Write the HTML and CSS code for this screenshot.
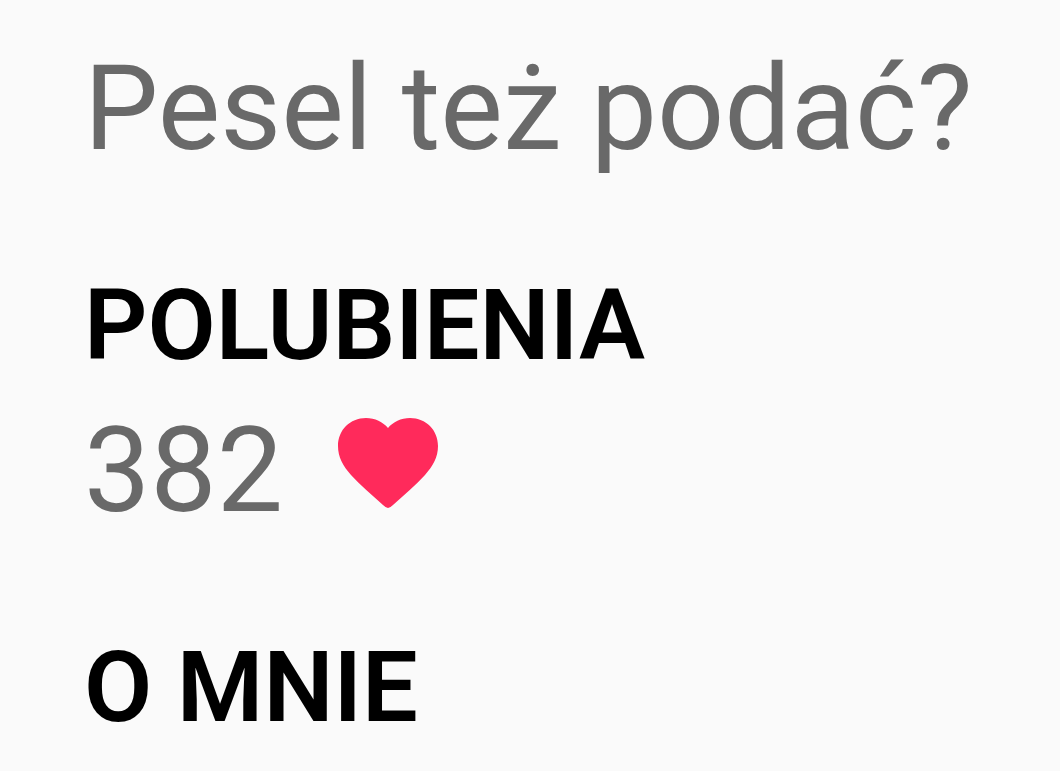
FILE: index.html
```html
<!DOCTYPE html>
<html lang="pl">
<head>
    <meta charset="UTF-8">
    <meta name="viewport" content="width=device-width, initial-scale=1.0">
    <title>Profil</title>
    <link rel="stylesheet" href="styles.css">
</head>
<body>
    <main class="profile">
        <p class="profile-text">Pesel też podać?</p>

        <section class="profile-section">
            <h2>POLUBIENIA</h2>
            <p class="profile-text likes">
                <span>382</span>
                <svg class="heart" viewBox="0 0 100 90" aria-hidden="true">
                    <path d="M50 90Q48 90 45 87C34 77 22 67 13 57C5 48 0 39 0 28C0 12 12 0 28 0C37 0 45 4 50 10C55 4 63 0 72 0C88 0 100 12 100 28C100 39 95 48 87 57C78 67 66 77 55 87Q52 90 50 90z"/>
                </svg>
            </p>
        </section>

        <section class="profile-section">
            <h2>O MNIE</h2>
        </section>
    </main>
</body>
</html>
```

FILE: styles.css
```css
body {
    font-family: Roboto, sans-serif;
    margin: 0;
    background-color: #fafafa;
    color: #000;
}

.profile {
    padding: 39px 0 0 84px;
}

.profile-text {
    margin: 0;
    font-size: 118px;
    line-height: 140px;
    color: #696969;
    white-space: nowrap;
}

.profile-section {
    margin-top: 90px;
}

.profile-section h2 {
    margin: 0 0 20px;
    font-size: 99px;
    font-weight: 600;
    line-height: 112px;
}

.likes {
    display: flex;
    align-items: center;
    gap: 55px;
}

.heart {
    width: 100px;
    height: 90px;
    margin-bottom: 16px;
    fill: #ff2a5b;
}
```
